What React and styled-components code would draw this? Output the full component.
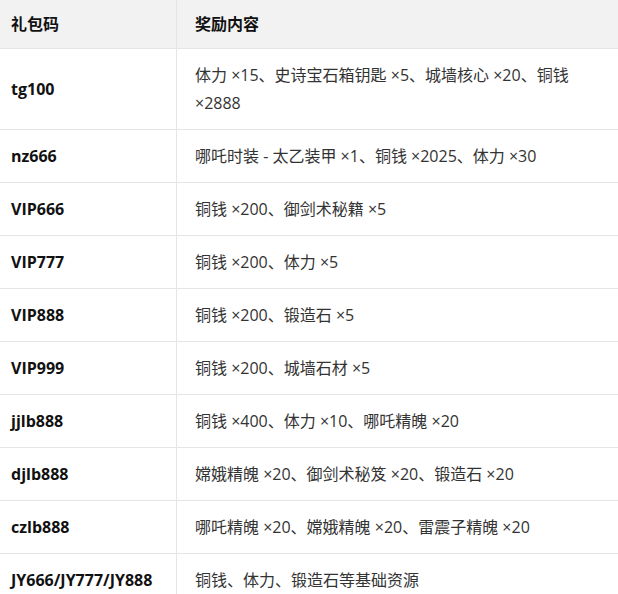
import styled, { createGlobalStyle } from "styled-components";

const GlobalStyle = createGlobalStyle`
  html, body {
    margin: 0;
    padding: 0;
    background: #fff;
  }
  body {
    font-family: "Open Sans", "Noto Sans CJK SC", sans-serif;
  }
`;

const Table = styled.table`
  width: 618px;
  border-collapse: collapse;
  table-layout: fixed;
  font-size: 16px;
  line-height: 28px;
  color: #333;
`;

const HeadRow = styled.tr`
  background-color: #f2f2f2;
  border-bottom: 1px solid #e5e5e5;
`;

const Th = styled.th`
  text-align: left;
  font-weight: 700;
  color: #111;
  padding: ${(p) => (p.$first ? "10px 11px" : "10px 18px")};
  border-right: ${(p) => (p.$first ? "1px solid #e5e5e5" : "none")};
  width: ${(p) => (p.$first ? "154px" : "auto")};
`;

const Row = styled.tr`
  border-bottom: 1px solid #e5e5e5;
`;

const CodeCell = styled.td`
  padding: 12px 11px;
  font-weight: 700;
  color: #111;
  border-right: 1px solid #e5e5e5;
  vertical-align: middle;
`;

const RewardCell = styled.td`
  padding: 12px 18px;
  vertical-align: middle;
`;

const rows = [
  ["tg100", "体力 ×15、史诗宝石箱钥匙 ×5、城墙核心 ×20、铜钱 ×2888"],
  ["nz666", "哪吒时装 - 太乙装甲 ×1、铜钱 ×2025、体力 ×30"],
  ["VIP666", "铜钱 ×200、御剑术秘籍 ×5"],
  ["VIP777", "铜钱 ×200、体力 ×5"],
  ["VIP888", "铜钱 ×200、锻造石 ×5"],
  ["VIP999", "铜钱 ×200、城墙石材 ×5"],
  ["jjlb888", "铜钱 ×400、体力 ×10、哪吒精魄 ×20"],
  ["djlb888", "嫦娥精魄 ×20、御剑术秘笈 ×20、锻造石 ×20"],
  ["czlb888", "哪吒精魄 ×20、嫦娥精魄 ×20、雷震子精魄 ×20"],
  ["JY666/JY777/JY888", "铜钱、体力、锻造石等基础资源"],
];

const App = () => {
  return (
    <>
      <GlobalStyle />
      <Table>
        <thead>
          <HeadRow>
            <Th $first>礼包码</Th>
            <Th>奖励内容</Th>
          </HeadRow>
        </thead>
        <tbody>
          {rows.map(([code, reward]) => (
            <Row key={code}>
              <CodeCell>{code}</CodeCell>
              <RewardCell>{reward}</RewardCell>
            </Row>
          ))}
        </tbody>
      </Table>
    </>
  );
};

export default App;
